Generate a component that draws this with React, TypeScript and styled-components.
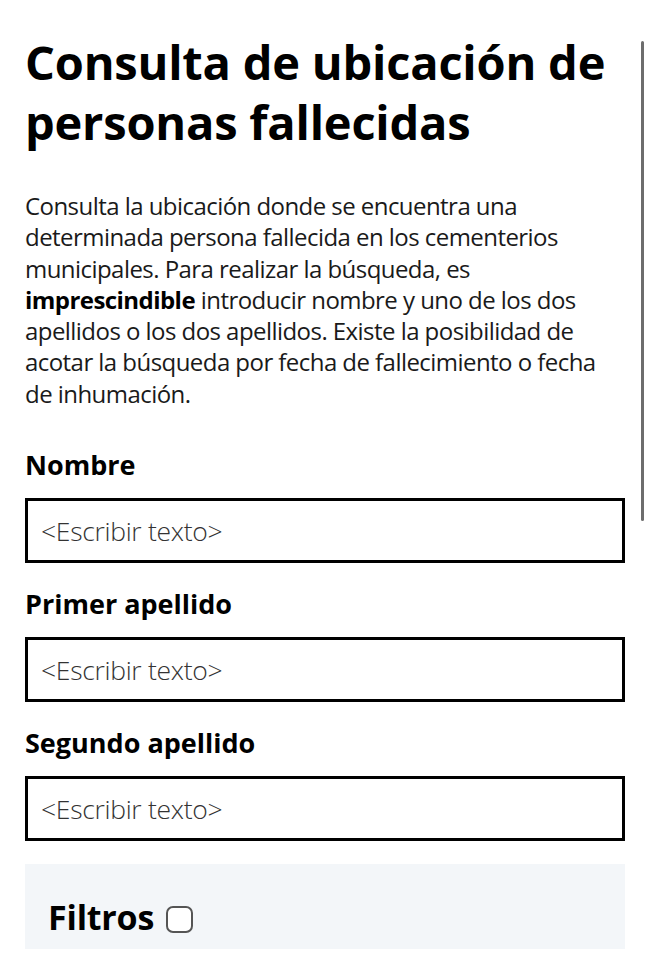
import React from 'react';
import styled, { createGlobalStyle } from 'styled-components';

const GlobalStyle = createGlobalStyle`
  html, body {
    margin: 0;
    padding: 0;
    background: #ffffff;
  }
  body {
    font-family: "Open Sans", "Noto Sans", sans-serif;
    color: #111;
  }
`;

const Page = styled.main`
  position: relative;
  padding: 32px 25px 0 25px;
  min-height: 975px;
  box-sizing: border-box;
`;

const ScrollIndicator = styled.div`
  position: fixed;
  top: 41px;
  right: 6px;
  width: 3px;
  height: 480px;
  border-radius: 2px;
  background: #6d6d6d;
`;

const Title = styled.h1`
  margin: 0;
  font-size: 47px;
  line-height: 60px;
  font-weight: 700;
  letter-spacing: -0.2px;
  color: #000;
`;

const Intro = styled.p`
  margin: 38px 0 0 0;
  font-size: 24px;
  line-height: 31.3px;
  font-weight: 400;
  color: #1a1a1a;
  letter-spacing: -0.55px;

  strong {
    font-weight: 700;
    color: #000;
  }
`;

const Form = styled.form`
  display: flex;
  flex-direction: column;
  margin-top: 40px;
`;

const Field = styled.div`
  display: flex;
  flex-direction: column;
  gap: 17px;
  margin-bottom: 25px;
`;

const Label = styled.label`
  font-size: 27px;
  line-height: 32px;
  font-weight: 700;
  color: #000;
  letter-spacing: 0;
`;

const TextInput = styled.input`
  box-sizing: border-box;
  width: 100%;
  height: 65px;
  border: 3px solid #000;
  border-radius: 0;
  padding: 0 13px;
  font-family: "Open Sans", "Noto Sans", sans-serif;
  font-size: 26.5px;
  font-weight: 300;
  letter-spacing: -0.3px;
  color: #222;
  background: #fff;
  outline: none;

  &::placeholder {
    color: #333;
    font-weight: 300;
  }
`;

const FilterPanel = styled.section`
  margin-top: -2px;
  background: #f3f6f9;
  height: 85px;
  display: flex;
  align-items: flex-end;
  padding: 0 23px 11px 23px;
  box-sizing: border-box;
`;

const FilterTitle = styled.h2`
  margin: 0;
  display: flex;
  align-items: center;
  gap: 12px;
  font-size: 34px;
  line-height: 42px;
  font-weight: 700;
  color: #000;
  letter-spacing: -0.2px;
`;

const Check = styled.input.attrs({ type: 'checkbox' })`
  appearance: none;
  margin: 4px 0 0 0;
  width: 27px;
  height: 27px;
  border: 2px solid #555;
  border-radius: 7px;
  background: #fff;
  box-sizing: border-box;
`;

const fields = [
  { id: 'nombre', label: 'Nombre' },
  { id: 'apellido1', label: 'Primer apellido' },
  { id: 'apellido2', label: 'Segundo apellido' },
];

const App = () => {
  return (
    <>
      <GlobalStyle />
      <Page>
        <Title>Consulta de ubicación de personas fallecidas</Title>
        <Intro>
          Consulta la ubicación donde se encuentra una determinada persona
          fallecida en los cementerios municipales. Para realizar la búsqueda,
          es <strong>imprescindible</strong> introducir nombre y uno de los dos
          apellidos o los dos apellidos. Existe la posibilidad de acotar la
          búsqueda por fecha de fallecimiento o fecha de inhumación.
        </Intro>
        <Form onSubmit={(e) => e.preventDefault()}>
          {fields.map((f) => (
            <Field key={f.id}>
              <Label htmlFor={f.id}>{f.label}</Label>
              <TextInput id={f.id} placeholder="<Escribir texto>" />
            </Field>
          ))}
          <FilterPanel>
            <FilterTitle>
              Filtros <Check aria-label="Filtros" />
            </FilterTitle>
          </FilterPanel>
        </Form>
        <ScrollIndicator />
      </Page>
    </>
  );
};

export default App;
